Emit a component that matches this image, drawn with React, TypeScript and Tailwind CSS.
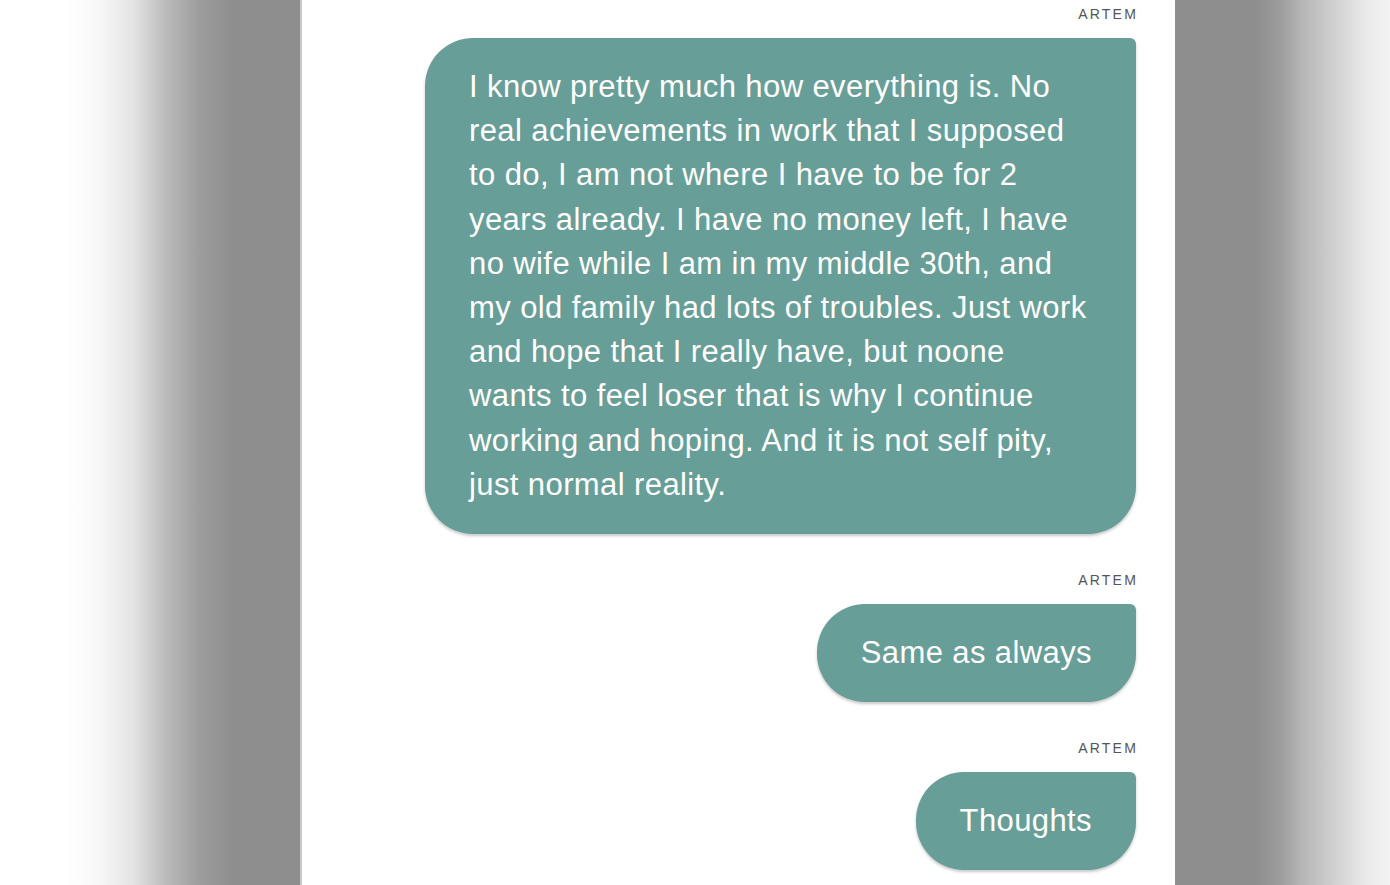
const messages = [
  {
    author: "Artem",
    text: "I know pretty much how everything is. No real achievements in work that I supposed to do, I am not where I have to be for 2 years already. I have no money left, I have no wife while I am in my middle 30th, and my old family had lots of troubles. Just work and hope that I really have, but noone wants to feel loser that is why I continue working and hoping. And it is not self pity, just normal reality.",
  },
  { author: "Artem", text: "Same as always" },
  { author: "Artem", text: "Thoughts" },
];

const Bubble = ({ author, text }: { author: string; text: string }) => {
  return (
    <div className="flex flex-col items-end">
      <span className="mb-4 -mr-[2px] text-[14px] leading-4 uppercase tracking-[2.2px] text-[#555]">
        {author}
      </span>
      <div className="max-w-[711px] rounded-[48px] rounded-tr-[6px] bg-[#689e98] px-11 py-[27px] text-[31px] leading-[44.2px] tracking-[0.4px] text-white shadow-[0_2px_3px_rgba(0,0,0,0.22)]">
        {text}
      </div>
    </div>
  );
};

export default function App() {
  return (
    <div className="flex h-[885px] w-full overflow-hidden font-['Liberation_Sans',Arial,sans-serif]">
      <div className="w-[302px] shrink-0 bg-[linear-gradient(to_right,#ffffff_0px,#ffffff_65px,#f7f7f7_100px,#e4e4e4_133px,#b9b9b9_167px,#9d9d9d_200px,#8e8e8e_232px,#8e8e8e_300px,#c9c9c9_300px,#c9c9c9_302px)]" />
      <main className="flex w-[873px] shrink-0 flex-col items-end gap-[38px] bg-white pr-[39px] pt-[6px]">
        {messages.map((m, i) => (
          <Bubble key={i} author={m.author} text={m.text} />
        ))}
      </main>
      <div className="flex-1 bg-[linear-gradient(to_right,#8e8e8e_0px,#8e8e8e_80px,#9c9c9c_105px,#b4b4b4_125px,#cfcfcf_158px,#e9e9e9_190px,#f3f3f3_215px)]" />
    </div>
  );
}
